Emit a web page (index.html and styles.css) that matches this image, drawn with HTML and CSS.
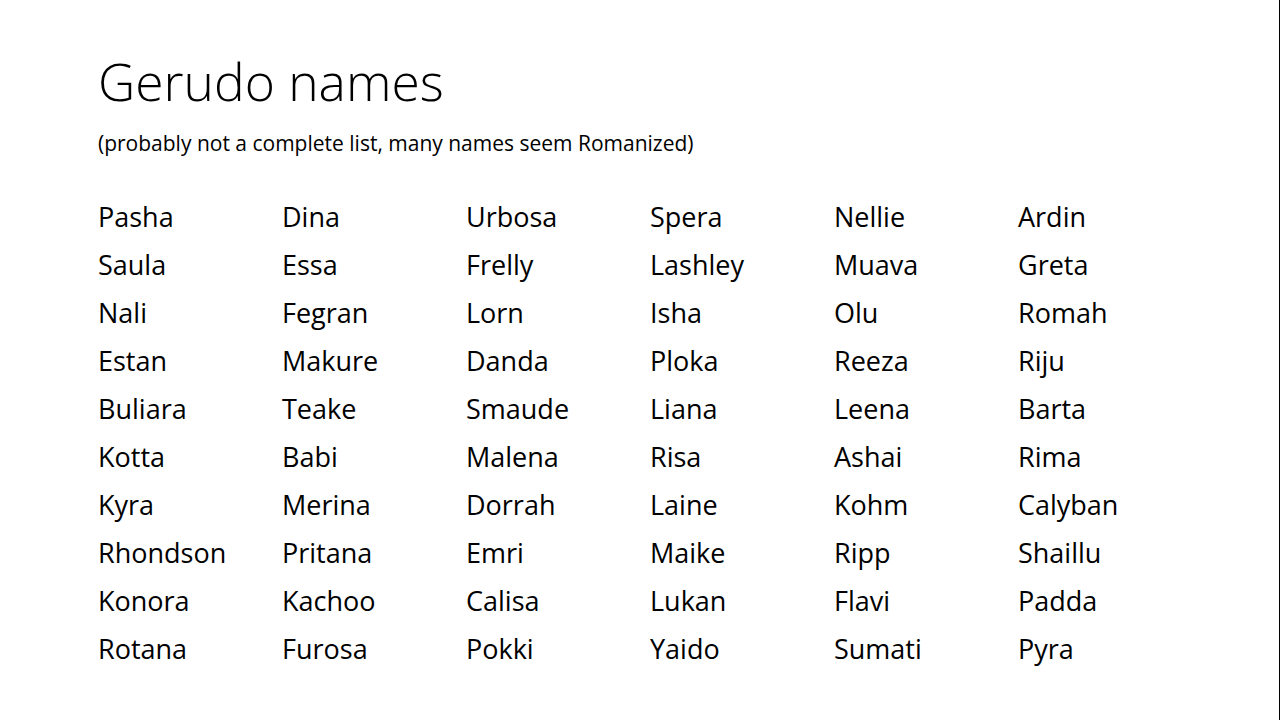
FILE: index.html
```html
<!DOCTYPE html>
<html>
<head>
<meta charset="utf-8">
<link rel="stylesheet" href="styles.css">
</head>
<body>
<div class="slide">
  <h1 class="title">Gerudo names</h1>
  <p class="subtitle">(probably not a complete list, many names seem Romanized)</p>
  <div class="names">
    <span>Pasha</span><span>Dina</span><span>Urbosa</span><span>Spera</span><span>Nellie</span><span>Ardin</span>
    <span>Saula</span><span>Essa</span><span>Frelly</span><span>Lashley</span><span>Muava</span><span>Greta</span>
    <span>Nali</span><span>Fegran</span><span>Lorn</span><span>Isha</span><span>Olu</span><span>Romah</span>
    <span>Estan</span><span>Makure</span><span>Danda</span><span>Ploka</span><span>Reeza</span><span>Riju</span>
    <span>Buliara</span><span>Teake</span><span>Smaude</span><span>Liana</span><span>Leena</span><span>Barta</span>
    <span>Kotta</span><span>Babi</span><span>Malena</span><span>Risa</span><span>Ashai</span><span>Rima</span>
    <span>Kyra</span><span>Merina</span><span>Dorrah</span><span>Laine</span><span>Kohm</span><span>Calyban</span>
    <span>Rhondson</span><span>Pritana</span><span>Emri</span><span>Maike</span><span>Ripp</span><span>Shaillu</span>
    <span>Konora</span><span>Kachoo</span><span>Calisa</span><span>Lukan</span><span>Flavi</span><span>Padda</span>
    <span>Rotana</span><span>Furosa</span><span>Pokki</span><span>Yaido</span><span>Sumati</span><span>Pyra</span>
  </div>
</div>
</body>
</html>
```

FILE: styles.css
```css
html, body {
  margin: 0;
  padding: 0;
  background: #fff;
}
.slide {
  width: 1280px;
  height: 720px;
  box-sizing: border-box;
  border-right: 1px solid #000;
  padding: 51px 0 0 98px;
  font-family: "Open Sans", "Noto Sans", sans-serif;
  color: #000;
}
.title {
  margin: 0;
  font-weight: 300;
  font-size: 51.5px;
  line-height: 60px;
}
.subtitle {
  margin: 18px 0 0;
  font-size: 21px;
  line-height: 28px;
}
.names {
  margin-top: 36px;
  display: grid;
  grid-template-columns: repeat(6, 184px);
  grid-auto-rows: 48px;
  font-size: 27px;
  line-height: 48px;
}
```
